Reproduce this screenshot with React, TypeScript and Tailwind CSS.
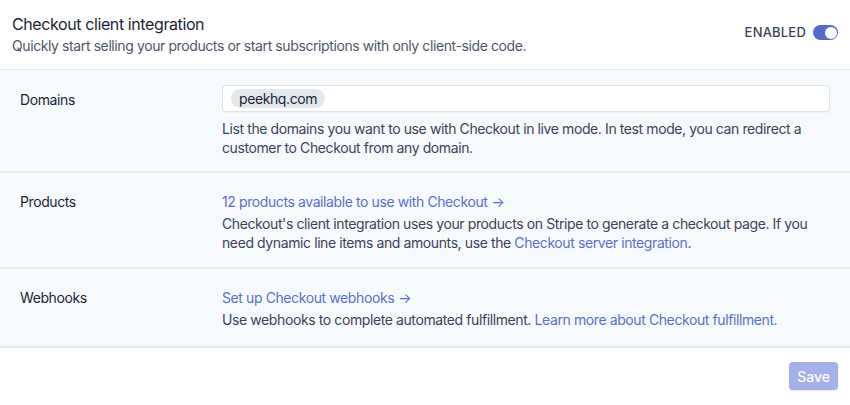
import React from "react";

const font = { fontFamily: "Inter, 'Noto Sans', sans-serif" };

const Arrow = () => <span className="ml-1">→</span>;

export default function App() {
  return (
    <div className="w-[850px] h-[405px] bg-white text-[14px] text-[#3c4257] tracking-[-0.4px]" style={font}>
      {/* Header */}
      <div className="flex items-start justify-between h-[70px] pl-3 pr-3 pt-[13px] border-b border-[#e3e8ee]">
        <div>
          <h2 className="text-[16px] leading-[22px] text-[#1a1f36]">Checkout client integration</h2>
          <p className="mt-[1px] leading-[20px] text-[#4f566b]">
            Quickly start selling your products or start subscriptions with only client-side code.
          </p>
        </div>
        <div className="flex items-center gap-[7px] pt-[10px]">
          <span className="text-[13px] font-medium tracking-[0.2px] text-[#3c4257]">ENABLED</span>
          <div className="w-[25px] h-[15px] rounded-full bg-[#5469d4] flex items-center justify-end pr-[1.5px]">
            <div className="w-[12px] h-[12px] rounded-full bg-white" />
          </div>
        </div>
      </div>

      {/* Sections */}
      <div className="bg-[#f7fafc]">
        <div className="flex px-5 pt-[15px] pb-[14px] border-b-2 border-[#e8ecf1]">
          <div className="w-[202px] pt-[5px] leading-[19px] text-[#1a1f36]">Domains</div>
          <div className="flex-1">
            <div className="h-[27px] bg-white rounded-[4px] border border-[#dfe3e8] shadow-[0_1px_1px_rgba(0,0,0,0.04)] flex items-center pl-2">
              <span className="px-[8px] h-[19px] leading-[19px] rounded-full bg-[#e3e8ee] text-[#1a1f36]">peekhq.com</span>
            </div>
            <p className="mt-[7px] leading-[19px] text-[#3c4257]">
              List the domains you want to use with Checkout in live mode. In test mode, you can redirect a customer to Checkout from any domain.
            </p>
          </div>
        </div>

        <div className="flex px-5 pt-[19px] pb-[15px] border-b-2 border-[#e8ecf1]">
          <div className="w-[202px] leading-[19px] text-[#1a1f36]">Products</div>
          <div className="flex-1">
            <a className="block leading-[19px] text-[#5a6ed2]">
              12 products available to use with Checkout<Arrow />
            </a>
            <p className="mt-[3px] leading-[19px] text-[#3c4257]">
              Checkout's client integration uses your products on Stripe to generate a checkout page. If you need dynamic line items and amounts, use the{" "}
              <a className="text-[#5a6ed2]">Checkout server integration</a>.
            </p>
          </div>
        </div>

        <div className="flex px-5 pt-[19px] pb-[17px] border-b-2 border-[#e8ecf1]">
          <div className="w-[202px] leading-[19px] text-[#1a1f36]">Webhooks</div>
          <div className="flex-1">
            <a className="block leading-[19px] text-[#5a6ed2]">
              Set up Checkout webhooks<Arrow />
            </a>
            <p className="mt-[3px] leading-[19px] text-[#3c4257]">
              Use webhooks to complete automated fulfillment.{" "}
              <a className="text-[#5a6ed2]">Learn more about Checkout fulfillment.</a>
            </p>
          </div>
        </div>
      </div>

      {/* Footer */}
      <div className="flex justify-end pt-[14px] pr-3">
        <button className="h-[28px] px-[8px] rounded-[4px] bg-[#a4b0ec] text-white font-medium tracking-normal shadow-[0_1px_2px_rgba(0,0,0,0.08)]">
          Save
        </button>
      </div>
    </div>
  );
}
